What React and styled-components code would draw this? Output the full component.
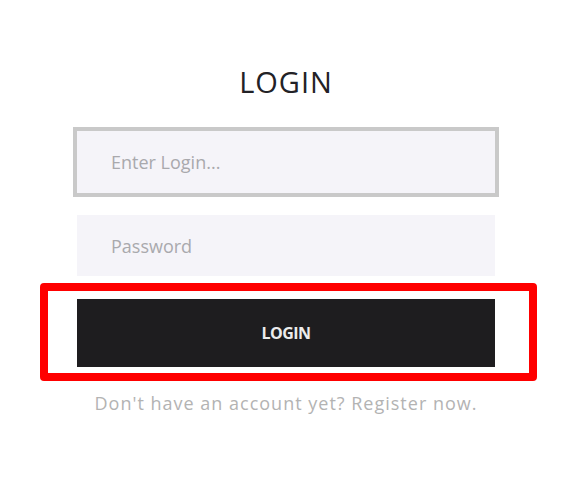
import styled, { createGlobalStyle } from "styled-components";

const GlobalStyle = createGlobalStyle`
    body {
        margin: 0;
        background: #ffffff;
        font-family: "Open Sans", "Noto Sans", sans-serif;
    }
`

const Page = styled.div`
    display: flex;
    justify-content: center;
    padding: 67px 7px 0 0;
`

const Form = styled.form`
    display: flex;
    flex-direction: column;
    width: 418px;
`

const Heading = styled.h2`
    margin: 0 0 35px;
    text-align: center;
    font-size: 29px;
    line-height: 1;
    font-weight: 500;
    letter-spacing: 1px;
    color: #222226;
`

const Input = styled.input`
    box-sizing: border-box;
    height: ${({ $height }) => $height}px;
    margin-top: ${({ $top }) => $top}px;
    padding: 0 34px;
    border: none;
    background-color: #f5f4f9;
    font-family: inherit;
    font-size: 18px;
    color: #333;
    outline: ${({ $focused }) => ($focused ? "4px solid #c9c9c9" : "none")};

    &::placeholder {
        color: #a9a9ad;
    }
`

const Highlight = styled.div`
    margin: 7px -42px 0 -37px;
    padding: 8px 34px 6px 29px;
    border: 8px solid #ff0000;
    border-radius: 4px;
`

const Button = styled.button`
    display: block;
    width: 100%;
    height: 68px;
    border: none;
    background-color: #1e1d1f;
    color: #ececec;
    font-family: inherit;
    font-size: 16px;
    font-weight: 700;
    letter-spacing: -0.5px;
`

const Footer = styled.p`
    margin: 10px 0 0;
    text-align: center;
    font-size: 18px;
    line-height: 1.4;
    letter-spacing: 1px;
    color: #b3b3b3;
`

const App = () => {
    return (
        <>
            <GlobalStyle />
            <Page>
                <Form onSubmit={(e) => e.preventDefault()}>
                    <Heading>LOGIN</Heading>
                    <Input type="text" placeholder="Enter Login..." $height={62} $top={0} $focused />
                    <Input type="password" placeholder="Password" $height={61} $top={22} />
                    <Highlight>
                        <Button type="submit">LOGIN</Button>
                    </Highlight>
                    <Footer>Don't have an account yet? Register now.</Footer>
                </Form>
            </Page>
        </>
    )
}

export default App;
